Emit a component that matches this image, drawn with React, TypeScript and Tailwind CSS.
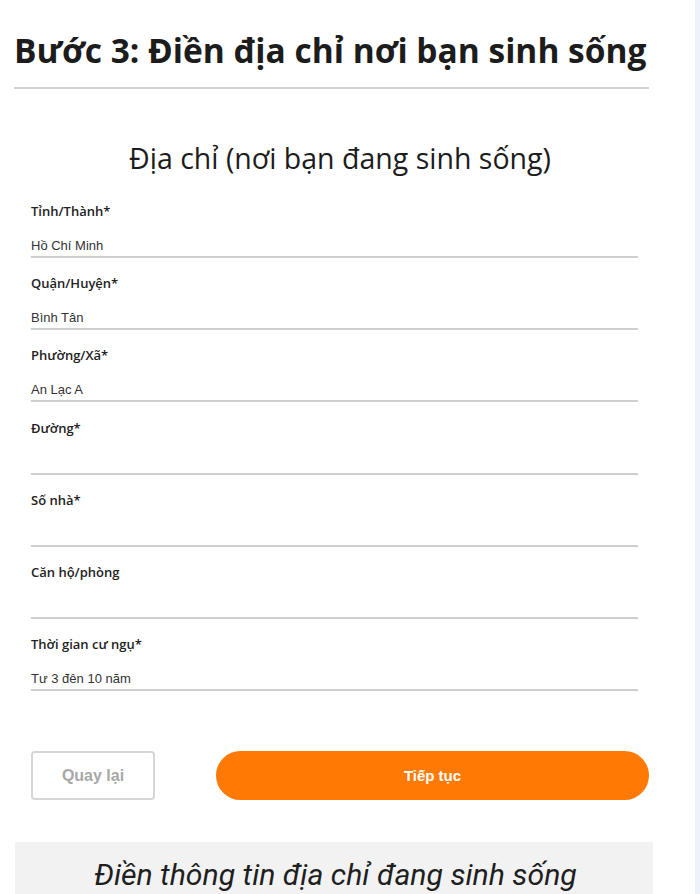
const fields = [
  { label: "Tỉnh/Thành*", value: "Hồ Chí Minh" },
  { label: "Quận/Huyện*", value: "Bình Tân" },
  { label: "Phường/Xã*", value: "An Lạc A" },
  { label: "Đường*", value: "" },
  { label: "Số nhà*", value: "" },
  { label: "Căn hộ/phòng", value: "" },
  { label: "Thời gian cư ngụ*", value: "Tư 3 đên 10 năm" },
];

function Field({ label, value }: { label: string; value: string }) {
  return (
    <div className="mb-[15.2px]">
      <div className="h-5 font-['Open_Sans',sans-serif] text-[13px] font-semibold leading-5 text-[#222]">
        {label}
      </div>
      <div className="mt-[17px] h-[20px] border-b-2 border-[#cfcfcf] pb-[2px] font-['Liberation_Sans',Arial,sans-serif] text-[13px] leading-4 text-[#333]">
        {value}
      </div>
    </div>
  );
}

export default function App() {
  return (
    <div className="flex min-h-[894px] w-full bg-white">
      <main className="flex w-[695px] shrink-0 flex-col">
        <h1 className="pl-[14px] pt-[28px] font-['Open_Sans',sans-serif] text-[33.5px] font-bold leading-[44px] text-[#1c1c1c]">
          Bước 3: Điền địa chỉ nơi bạn sinh sống
        </h1>
        <div className="ml-[14px] mt-[15px] h-[2px] w-[635px] bg-[#d2d2d2]" />

        <h2 className="mt-[49px] w-[680px] text-center font-['Open_Sans',sans-serif] text-[28.5px] leading-10 text-[#1c1c1c]">
          Địa chỉ (nơi bạn đang sinh sống)
        </h2>

        <form className="ml-[31px] mt-[23px] flex w-[607px] flex-col">
          {fields.map((f) => (
            <Field key={f.label} label={f.label} value={f.value} />
          ))}
        </form>

        <div className="ml-[31px] mt-[45px] flex w-[618px] items-center justify-between">
          <button
            type="button"
            className="h-[49px] w-[124px] rounded-[4px] border-2 border-[#d6d6d6] bg-white font-['Liberation_Sans',Arial,sans-serif] text-[16px] font-bold text-[#a8a8a8]"
          >
            Quay lại
          </button>
          <button
            type="button"
            className="h-[49px] w-[433px] rounded-full bg-[#ff7a05] font-['Liberation_Sans',Arial,sans-serif] text-[15px] font-bold text-white"
          >
            Tiếp tục
          </button>
        </div>

        <div className="ml-[15px] mt-[42px] h-[70px] w-[638px] bg-[#f2f2f2] pl-[3px] pt-[15px] text-center font-['Roboto',sans-serif] text-[30.2px] italic leading-9 text-[#1f1f1f]">
          Điền thông tin địa chỉ đang sinh sống
        </div>
      </main>
      <div className="w-[5px] bg-[#eef2fa]" />
    </div>
  );
}
